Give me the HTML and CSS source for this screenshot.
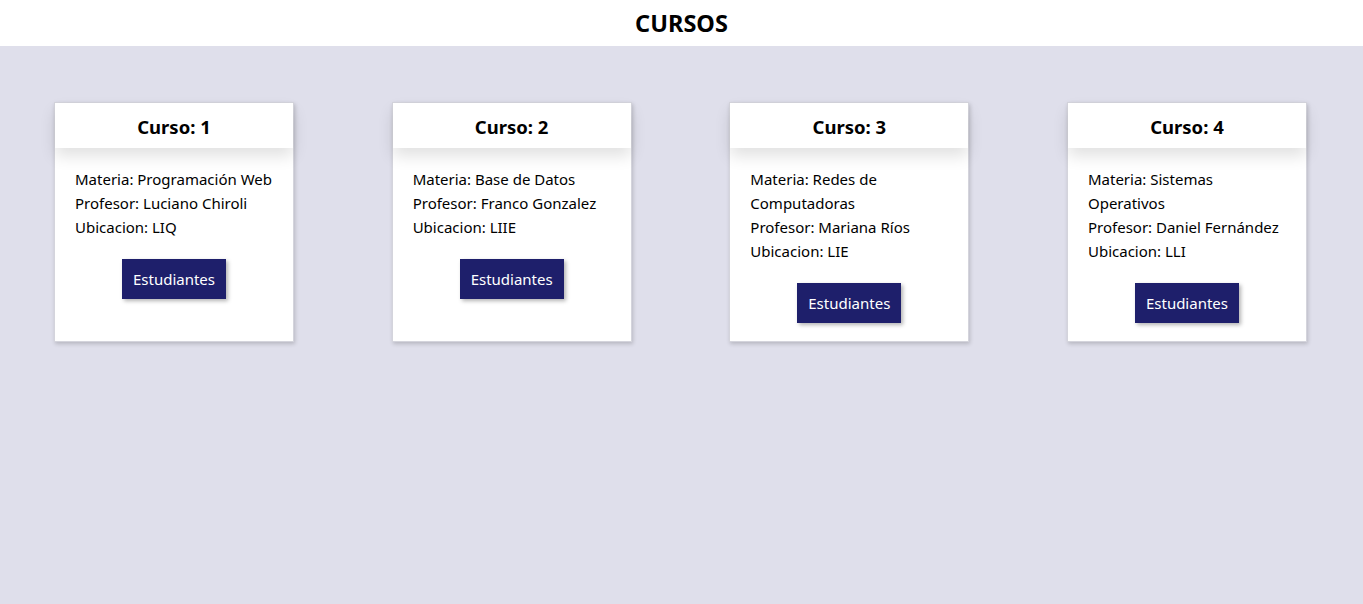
FILE: index.html
```html
<!DOCTYPE html>
<html lang="es">
<head>
<meta charset="utf-8">
<title>Cursos</title>
<link rel="stylesheet" href="styles.css">
</head>
<body>
<header class="topbar"><h1 class="title">CURSOS</h1></header>
<main class="courses">
  <article class="card">
    <h2 class="card-head">Curso: 1</h2>
    <div class="card-body">
      <p>Materia: Programación Web</p>
      <p>Profesor: Luciano Chiroli</p>
      <p>Ubicacion: LIQ</p>
      <button class="btn">Estudiantes</button>
    </div>
  </article>
  <article class="card">
    <h2 class="card-head">Curso: 2</h2>
    <div class="card-body">
      <p>Materia: Base de Datos</p>
      <p>Profesor: Franco Gonzalez</p>
      <p>Ubicacion: LIIE</p>
      <button class="btn">Estudiantes</button>
    </div>
  </article>
  <article class="card">
    <h2 class="card-head">Curso: 3</h2>
    <div class="card-body">
      <p>Materia: Redes de Computadoras</p>
      <p>Profesor: Mariana Ríos</p>
      <p>Ubicacion: LIE</p>
      <button class="btn">Estudiantes</button>
    </div>
  </article>
  <article class="card">
    <h2 class="card-head">Curso: 4</h2>
    <div class="card-body">
      <p>Materia: Sistemas Operativos</p>
      <p>Profesor: Daniel Fernández</p>
      <p>Ubicacion: LLI</p>
      <button class="btn">Estudiantes</button>
    </div>
  </article>
</main>
</body>
</html>
```
FILE: styles.css
```css
* { box-sizing: border-box; }
html, body {
  margin: 0;
  padding: 0;
  height: 100%;
}
body {
  background: #dfdfeb;
  font-family: "Noto Sans", "Open Sans", sans-serif;
  color: #000;
}
.topbar {
  background: #fff;
  height: 46px;
  display: flex;
  align-items: center;
  justify-content: center;
}
.title {
  margin: 0;
  font-size: 23.5px;
  font-weight: 700;
  letter-spacing: 0;
}
.courses {
  display: flex;
  justify-content: space-between;
  align-items: flex-start;
  padding: 56px 56px 0 54px;
}
.card {
  width: 240px;
  height: 240px;
  background: #fff;
  border: 1px solid #d4d4dc;
  box-shadow: 1px 2px 4px rgba(0, 0, 0, 0.18);
  display: flex;
  flex-direction: column;
}
.card-head {
  margin: 0;
  height: 45px;
  padding-top: 1px;
  display: flex;
  align-items: center;
  justify-content: center;
  font-size: 18.5px;
  font-weight: 700;
  box-shadow: 0 8px 16px rgba(0, 0, 0, 0.12);
  position: relative;
}
.card-body {
  padding: 19px 20px 0 20px;
  display: flex;
  flex-direction: column;
  font-size: 15px;
  line-height: 24px;
}
.card-body p {
  margin: 0;
}
.btn {
  align-self: center;
  margin-top: 20px;
  width: 104px;
  height: 40px;
  background: #1e1f6b;
  color: #fff;
  border: none;
  font-family: inherit;
  font-size: 15px;
  box-shadow: 2px 2px 4px rgba(0, 0, 0, 0.3);
  cursor: pointer;
}
```
